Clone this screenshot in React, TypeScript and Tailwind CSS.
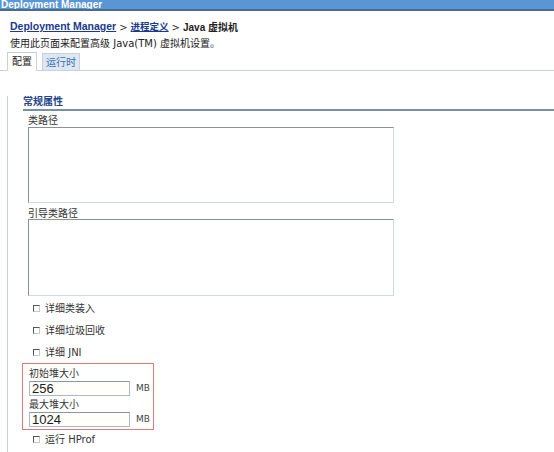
import React from "react";

const cjk = "font-['DejaVu_Sans','Noto_Sans_CJK_SC',sans-serif]";

function CheckRow({ label, last }: { label: string; last?: boolean }) {
  return (
    <div className={`flex items-center pl-[10px] ${last ? "h-[18px]" : "h-[22px]"}`}>
      <span className="mr-[5px] block h-[7px] w-[7px] border border-t-[#555] border-l-[#555] border-b-[#c8c8c8] border-r-[#c8c8c8] bg-white" />
      <span className="text-[10px] text-[#333]">{label}</span>
    </div>
  );
}

function TextArea() {
  return (
    <div className="ml-[5px] w-[366px] border border-t-[#8a9098] border-l-[#8a9098] border-b-[#d0d8e0] border-r-[#d0d8e0] bg-white" />
  );
}

function HeapField({ label, value }: { label: string; value: string }) {
  return (
    <div className="flex flex-col">
      <div className="h-[14px] text-[10px] leading-[14px] text-[#333]">{label}</div>
      <div className="flex items-center">
        <div className="flex h-[15px] w-[101px] items-center border border-[#a8b8c8] border-t-[#8898a8] bg-[#fffef8] pl-[2px] font-['Liberation_Sans',sans-serif] text-[13px] text-[#1a1a1a]">
          {value}
        </div>
        <span className="ml-[6px] text-[9px] text-[#444]">MB</span>
      </div>
    </div>
  );
}

export default function App() {
  return (
    <div className={`h-[452px] w-[554px] overflow-hidden bg-white ${cjk}`}>
      <div className="h-[11px] overflow-hidden border-b-2 border-[#4b6d8b] bg-[#5896d6] pl-[1px] font-['Liberation_Sans',sans-serif] text-[10px] font-bold leading-[9px] text-white">
        Deployment Manager
      </div>

      <div className="mt-[9px] flex h-[14px] items-center pl-[10px] text-[10px] font-bold text-[#222]">
        <a className="font-['Liberation_Sans',sans-serif] text-[10.5px] text-[#1c3a8c] underline">Deployment Manager</a>
        <span className="px-[3px] font-normal text-[#333]">&gt;</span>
        <a className="text-[9.5px] text-[#1c3a8c] underline">进程定义</a>
        <span className="px-[3px] font-normal text-[#333]">&gt;</span>
        <span className="font-['Liberation_Sans','Noto_Sans_CJK_SC',sans-serif]">Java 虚拟机</span>
      </div>

      <div className="mt-[2px] flex h-[14px] items-center pl-[10px] text-[10px] text-[#222]">
        使用此页面来配置高级 Java(TM) 虚拟机设置。
      </div>

      <div className="mt-[2px] flex h-[19px] items-end border-b border-[#c8d0d8] pl-[7px]">
        <div className="-mb-px flex h-[19px] w-[30px] items-center justify-center border border-[#c8d0d8] border-b-white bg-white text-[10px] text-[#222]">
          配置
        </div>
        <div className="ml-[5px] flex h-[17px] w-[38px] items-center justify-center border border-b-0 border-[#c8d0d8] bg-[#dde6f2] text-[10px] text-[#3b6fb0]">
          运行时
        </div>
      </div>

      <div className="ml-[7px] h-[400px] border-l border-[#c8d0d8] pl-[15px]">
        <div className="mt-[25px] border-b-2 border-[#7990a2] pb-[1px] text-[10px] font-bold leading-[12px] text-[#24458a]">
          常规属性
        </div>

        <div className="mt-[3px] h-[13px] pl-[5px] text-[10px] leading-[13px] text-[#333]">类路径</div>
        <div className="flex h-[76px]">
          <TextArea />
        </div>

        <div className="mt-[5px] h-[11px] pl-[5px] text-[10px] leading-[11px] text-[#333]">引导类路径</div>
        <div className="flex h-[77px]">
          <TextArea />
        </div>

        <div className="mt-[1px]">
          <CheckRow label="详细类装入" />
          <CheckRow label="详细垃圾回收" />
          <CheckRow label="详细 JNI" />
        </div>

        <div className="ml-[-1px] flex h-[67px] w-[132px] flex-col gap-[2px] border border-[#e07a7a] pl-[6px] pt-[3px]">
          <HeapField label="初始堆大小" value="256" />
          <HeapField label="最大堆大小" value="1024" />
        </div>

        <CheckRow label="运行 HProf" last />
      </div>
    </div>
  );
}
